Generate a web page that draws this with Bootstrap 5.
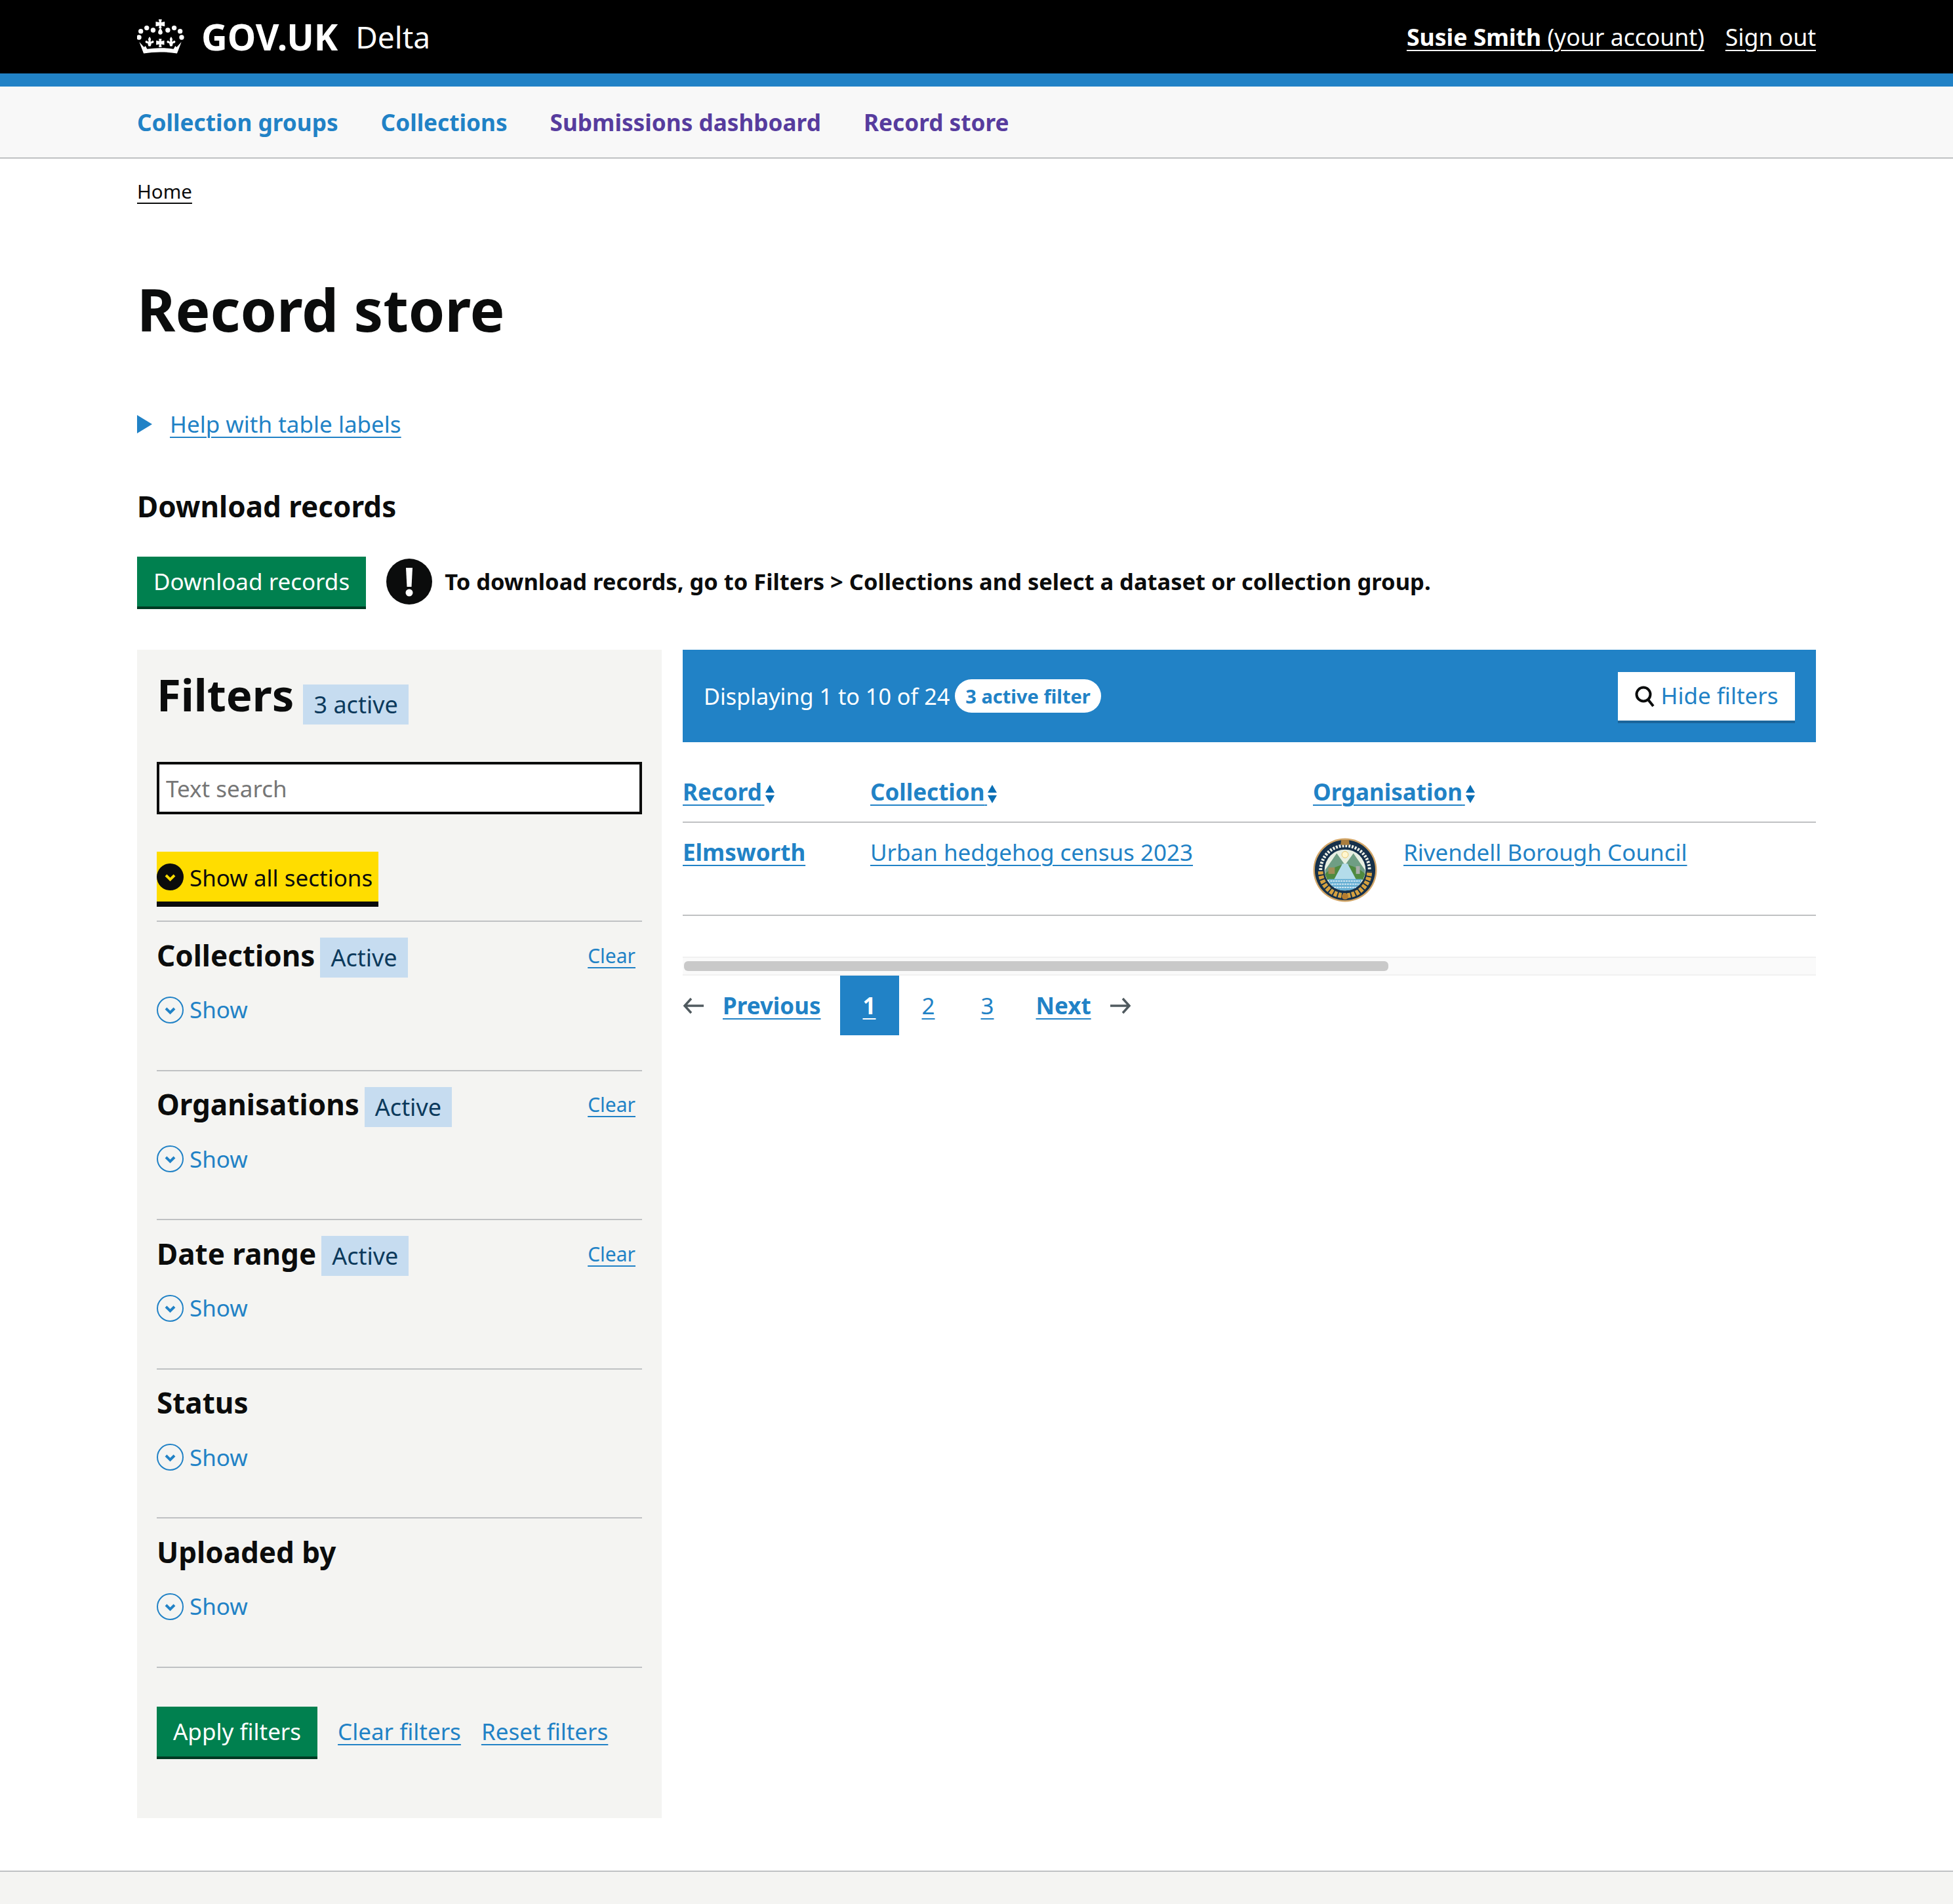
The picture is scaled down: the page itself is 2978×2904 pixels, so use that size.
<!DOCTYPE html>
<html lang="en">

<head>
    <meta charset="UTF-8">
    <title>Record store - Delta</title>
    <link rel="stylesheet" href="https://cdn.jsdelivr.net/npm/bootstrap@5.3.3/dist/css/bootstrap.min.css">
    <style>
        body {
            font-family: "Noto Sans", "Lato", sans-serif;
            font-size: 35px;
            line-height: 44px;
            color: #0b0c0c;
        }

        a {
            color: #2182c6;
            text-underline-offset: 6px;
            text-decoration-thickness: 2px;
        }

        .gv-wrap {
            padding-left: 209px;
            padding-right: 209px;
        }

        .gv-top {
            height: 112px;
            background: #000;
            color: #fff;
        }

        .gv-top a {
            color: #fff;
            font-size: 35.600px;
        }

        .gv-wordmark {
            font-size: 55px;
            font-weight: 700;
            line-height: 60px;
            margin-left: 26px;
        }

        .gv-service {
            font-size: 46px;
            line-height: 60px;
            margin-left: 27px;
        }

        .gv-band {
            height: 20px;
            background: #2182c6;
        }

        .gv-nav {
            height: 110px;
            background: #f8f8f8;
            border-bottom: 2px solid #bfc1c3;
            gap: 65px;
        }

        .gv-nav a {
            font-weight: 700;
            font-size: 35.200px;
            text-decoration: none;
        }

        .gv-nav a.gv-seen {
            color: #573c9e;
        }

        .gv-crumb {
            padding-top: 30px;
            font-size: 29.500px;
            line-height: 40px;
        }

        .gv-crumb a {
            color: #0b0c0c;
        }

        .gv-title {
            font-size: 89px;
            line-height: 100px;
            font-weight: 700;
            margin: 110px 0 103px;
        }

        .gv-help {
            gap: 27px;
        }

        .gv-tri {
            width: 0;
            height: 0;
            border-left: 23px solid #2182c6;
            border-top: 14px solid transparent;
            border-bottom: 14px solid transparent;
        }

        .gv-sub {
            font-size: 44px;
            line-height: 54px;
            font-weight: 700;
            margin: 76px 0 50px;
        }

        .gv-go {
            background: #00804f;
            color: #fff;
            font-size: 35px;
            line-height: 44px;
            border: 0;
            border-radius: 0;
            padding: 16px 25px;
            box-shadow: 0 4px 0 #003a22;
        }

        .gv-go:hover {
            background: #00804f;
            color: #fff;
        }

        .gv-warn {
            gap: 19px;
            margin-left: 31px;
            font-weight: 700;
            font-size: 34.500px;
        }

        .gv-mainrow {
            margin-top: 66px;
            gap: 32px;
        }

        .gv-panel {
            width: 800px;
            flex: none;
            background: #f4f4f2;
            padding: 30px 30px 94px;
        }

        .gv-filterhead {
            height: 84px;
            gap: 14px;
        }

        .gv-filterhead h2 {
            font-size: 67px;
            line-height: 76px;
            font-weight: 700;
            margin: 0;
            align-self: flex-start;
        }

        .gv-tag {
            background: #c6dcf0;
            color: #0c3a5c;
            height: 61px;
            line-height: 61px;
            padding: 0 16px;
            flex: none;
            font-size: 36px;
        }

        .gv-search {
            display: block;
            width: 100%;
            height: 80px;
            margin-top: 57px;
            border: 4px solid #0b0c0c;
            border-radius: 0;
            background: #fff;
            font-size: 35px;
            padding: 0 10px;
        }

        .gv-search::placeholder {
            color: #767676;
        }

        .gv-showall {
            height: 84px;
            margin-top: 57px;
            margin-bottom: 21px;
            width: 338px;
            background: #ffdd00;
            border-bottom: 8px solid #0b0c0c;
            gap: 9px;
            white-space: nowrap;
        }

        .gv-showall span {
            margin-top: 4px;
        }

        .gv-sect {
            height: 227.600px;
            border-top: 2px solid #bfc1c3;
            padding-top: 24px;
        }

        .gv-last {
            border-top: 2px solid #bfc1c3;
            padding-top: 59px;
            gap: 31px;
        }

        .gv-secthead {
            height: 61px;
            gap: 8px;
            padding-right: 10px;
        }

        .gv-secthead h3 {
            font-size: 44px;
            line-height: 54px;
            font-weight: 700;
            margin: 0 0 8px;
        }

        .gv-clear {
            font-size: 30px;
            margin-bottom: 6px;
        }

        .gv-show {
            margin-top: 27px;
            gap: 9px;
            color: #2182c6;
        }

        .gv-resultbar {
            height: 141px;
            background: #2182c6;
            color: #fff;
            padding: 0 32px;
            font-size: 34.200px;
        }

        .gv-pill {
            background: #fff;
            color: #2182c6;
            font-size: 29px;
            font-weight: 700;
            line-height: 51px;
            height: 51px;
            padding: 0 16px;
            border-radius: 26px;
            margin-left: 8px;
        }

        .gv-hide {
            width: 270px;
            height: 74px;
            background: #fff;
            color: #2182c6;
            border: 0;
            border-radius: 0;
            box-shadow: 0 4px 0 #1b659b;
            font-size: 35px;
            gap: 8px;
            padding: 0;
        }

        .gv-hide:hover {
            background: #fff;
            color: #2182c6;
        }

        .gv-tbl {
            margin: 0;
            width: 100%;
            table-layout: fixed;
        }

        .gv-tbl th,
        .gv-tbl td {
            border-bottom: 2px solid #bfc1c3;
            padding: 0;
            vertical-align: top;
            background: transparent;
        }

        .gv-tbl th {
            height: 122px;
            padding-top: 54px;
        }

        .gv-tbl td {
            height: 142px;
            padding-top: 23px;
        }

        .gv-nb {
            font-size: 14px;
        }

        .gv-orgcell {
            gap: 40px;
        }

        .gv-seal {
            width: 98px;
            height: 100px;
            margin-top: -1px;
            flex: none;
        }

        .gv-scroll {
            height: 29px;
            margin-top: 62px;
            background: #fafafa;
            border-top: 2px solid #f1f1f1;
            border-bottom: 2px solid #f1f1f1;
            padding: 5px 2px;
        }

        .gv-thumb {
            height: 15px;
            background: #c9c9c9;
            border-radius: 6px;
        }

        .gv-pager {
            height: 91px;
        }

        .gv-prevnext {
            font-weight: 700;
            margin: 0 29px;
        }

        .gv-num {
            width: 90px;
            height: 91px;
            line-height: 91px;
            text-align: center;
        }

        .gv-num.gv-cur {
            background: #2182c6;
            color: #fff;
            font-weight: 700;
        }

        .gv-foot {
            height: 51px;
            margin-top: 80px;
            background: #f4f4f2;
            border-top: 2px solid #bfc1c3;
        }
    </style>
</head>

<body>
    <header class="gv-top gv-wrap d-flex align-items-center">
        <svg width="72" height="54" viewBox="28 42 215 160" fill="#fff" aria-hidden="true">
            <path d="M126 43h15l-3 13 16-3v22l-16-3 2 12h-13l2-12-16 3V53l16 3z" />
            <path d="M134 80c3 8 10 14 10 22a10 10 0 0 1-20 0c0-8 7-14 10-22z" />
            <circle cx="101" cy="92" r="11" />
            <circle cx="168" cy="92" r="11" />
            <circle cx="72" cy="82" r="11" />
            <circle cx="197" cy="82" r="11" />
            <circle cx="45" cy="97" r="11" />
            <circle cx="224" cy="97" r="11" />
            <circle cx="37" cy="125" r="11" />
            <circle cx="231" cy="125" r="11" />
            <path d="M127 132h13l-2 10 14-3v20l-14-3 2 14h-13l2-14-14 3v-20l14 3z" />
            <path id="gv-fleur" d="M85 122c6 8 8 12 4 20l3 3c4-6 10-6 12-2 2 6-4 10-10 8l-4 14H80l-4-14c-6 2-12-2-10-8 2-4 8-4 12 2l3-3c-4-8-2-12 4-20z" />
            <path d="M183 122c6 8 8 12 4 20l3 3c4-6 10-6 12-2 2 6-4 10-10 8l-4 14h-10l-4-14c-6 2-12-2-10-8 2-4 8-4 12 2l3-3c-4-8-2-12 4-20z" />
            <path d="M38 146l22 24 6-6 8 14c40-6 80-6 120 0l8-14 6 6 22-24-20 52c-50-8-102-8-152 0z" />
        </svg>
        <span class="gv-wordmark">GOV.UK</span>
        <span class="gv-service">Delta</span>
        <div class="ms-auto d-flex gap-4">
            <a href="#"><b>Susie Smith</b> (your account)</a>
            <a href="#" class="ms-2">Sign out</a>
        </div>
    </header>
    <div class="gv-band"></div>
    <nav class="gv-nav gv-wrap d-flex align-items-center">
        <a href="#">Collection groups</a>
        <a href="#">Collections</a>
        <a href="#" class="gv-seen">Submissions dashboard</a>
        <a href="#" class="gv-seen">Record store</a>
    </nav>

    <main class="gv-wrap">
        <div class="gv-crumb"><a href="#">Home</a></div>
        <h1 class="gv-title">Record store</h1>

        <div class="gv-help d-flex align-items-center">
            <span class="gv-tri"></span>
            <a href="#">Help with table labels</a>
        </div>

        <h2 class="gv-sub">Download records</h2>
        <div class="d-flex align-items-center">
            <button type="button" class="btn gv-go">Download records</button>
            <div class="gv-warn d-flex align-items-center">
                <svg width="70" height="70" viewBox="0 0 70 70" aria-hidden="true">
                    <circle cx="35" cy="35" r="35" fill="#0b0c0c" />
                    <path d="M30 14h10l-1.500 29h-7z" fill="#fff" />
                    <circle cx="35" cy="52" r="5.500" fill="#fff" />
                </svg>
                <span>To download records, go to Filters &gt; Collections and select a dataset or collection group.</span>
            </div>
        </div>

        <div class="gv-mainrow d-flex align-items-start">
            <aside class="gv-panel">
                <div class="gv-filterhead d-flex align-items-end">
                    <h2>Filters</h2>
                    <span class="gv-tag">3 active</span>
                </div>
                <input class="gv-search" type="text" placeholder="Text search">
                <div class="gv-showall d-flex align-items-center">
                    <svg width="41" height="41" viewBox="0 0 41 41" aria-hidden="true">
                        <circle cx="20.500" cy="20.500" r="20.500" fill="#0b0c0c" />
                        <path d="M14 18l6.500 6.500L27 18" fill="none" stroke="#ffdd00" stroke-width="4" />
                    </svg>
                    <span>Show all sections</span>
                </div>

                <section class="gv-sect">
                    <div class="gv-secthead d-flex align-items-center">
                        <h3>Collections</h3>
                        <span class="gv-tag">Active</span>
                        <a href="#" class="gv-clear ms-auto">Clear</a>
                    </div>
                    <div class="gv-show d-flex align-items-center">
                        <svg width="41" height="41" viewBox="0 0 41 41" aria-hidden="true">
                            <circle cx="20.500" cy="20.500" r="19.500" fill="none" stroke="#2182c6" stroke-width="2" />
                            <path d="M14 18l6.500 6.500L27 18" fill="none" stroke="#2182c6" stroke-width="4" />
                        </svg>
                        <span>Show</span>
                    </div>
                </section>
                <section class="gv-sect">
                    <div class="gv-secthead d-flex align-items-center">
                        <h3>Organisations</h3>
                        <span class="gv-tag">Active</span>
                        <a href="#" class="gv-clear ms-auto">Clear</a>
                    </div>
                    <div class="gv-show d-flex align-items-center">
                        <svg width="41" height="41" viewBox="0 0 41 41" aria-hidden="true">
                            <circle cx="20.500" cy="20.500" r="19.500" fill="none" stroke="#2182c6" stroke-width="2" />
                            <path d="M14 18l6.500 6.500L27 18" fill="none" stroke="#2182c6" stroke-width="4" />
                        </svg>
                        <span>Show</span>
                    </div>
                </section>
                <section class="gv-sect">
                    <div class="gv-secthead d-flex align-items-center">
                        <h3>Date range</h3>
                        <span class="gv-tag">Active</span>
                        <a href="#" class="gv-clear ms-auto">Clear</a>
                    </div>
                    <div class="gv-show d-flex align-items-center">
                        <svg width="41" height="41" viewBox="0 0 41 41" aria-hidden="true">
                            <circle cx="20.500" cy="20.500" r="19.500" fill="none" stroke="#2182c6" stroke-width="2" />
                            <path d="M14 18l6.500 6.500L27 18" fill="none" stroke="#2182c6" stroke-width="4" />
                        </svg>
                        <span>Show</span>
                    </div>
                </section>
                <section class="gv-sect">
                    <div class="gv-secthead d-flex align-items-center">
                        <h3>Status</h3>
                    </div>
                    <div class="gv-show d-flex align-items-center">
                        <svg width="41" height="41" viewBox="0 0 41 41" aria-hidden="true">
                            <circle cx="20.500" cy="20.500" r="19.500" fill="none" stroke="#2182c6" stroke-width="2" />
                            <path d="M14 18l6.500 6.500L27 18" fill="none" stroke="#2182c6" stroke-width="4" />
                        </svg>
                        <span>Show</span>
                    </div>
                </section>
                <section class="gv-sect">
                    <div class="gv-secthead d-flex align-items-center">
                        <h3>Uploaded by</h3>
                    </div>
                    <div class="gv-show d-flex align-items-center">
                        <svg width="41" height="41" viewBox="0 0 41 41" aria-hidden="true">
                            <circle cx="20.500" cy="20.500" r="19.500" fill="none" stroke="#2182c6" stroke-width="2" />
                            <path d="M14 18l6.500 6.500L27 18" fill="none" stroke="#2182c6" stroke-width="4" />
                        </svg>
                        <span>Show</span>
                    </div>
                </section>

                <div class="gv-last d-flex align-items-center">
                    <button type="button" class="btn gv-go">Apply filters</button>
                    <a href="#">Clear filters</a>
                    <a href="#">Reset filters</a>
                </div>
            </aside>

            <div class="flex-grow-1">
                <div class="gv-resultbar d-flex align-items-center">
                    <span>Displaying 1 to 10 of 24</span>
                    <span class="gv-pill">3 active filter</span>
                    <button type="button" class="btn gv-hide ms-auto d-flex align-items-center justify-content-center">
                        <svg width="32" height="34" viewBox="0 0 32 34" aria-hidden="true">
                            <circle cx="14" cy="14" r="10.500" fill="none" stroke="#0b0c0c" stroke-width="4" />
                            <path d="M21 22l8 10" stroke="#0b0c0c" stroke-width="4" />
                        </svg>
                        <span>Hide filters</span>
                    </button>
                </div>

                <table class="gv-tbl">
                    <colgroup>
                        <col style="width: 286px">
                        <col style="width: 675px">
                        <col>
                    </colgroup>
                    <thead>
                        <tr>
                            <th><a href="#">Record<span class="gv-nb">&nbsp;</span></a><svg width="16" height="30" viewBox="0 0 16 30" aria-hidden="true"><path d="M8 1l7 12H1zM8 29L1 17h14z" fill="#0b6fb5" /></svg></th>
                            <th><a href="#">Collection<span class="gv-nb">&nbsp;</span></a><svg width="16" height="30" viewBox="0 0 16 30" aria-hidden="true"><path d="M8 1l7 12H1zM8 29L1 17h14z" fill="#0b6fb5" /></svg></th>
                            <th><a href="#">Organisation<span class="gv-nb">&nbsp;</span></a><svg width="16" height="30" viewBox="0 0 16 30" aria-hidden="true"><path d="M8 1l7 12H1zM8 29L1 17h14z" fill="#0b6fb5" /></svg></th>
                        </tr>
                    </thead>
                    <tbody>
                        <tr>
                            <td><a href="#"><b>Elmsworth</b></a></td>
                            <td><a href="#">Urban hedgehog census 2023</a></td>
                            <td>
                                <div class="gv-orgcell d-flex align-items-start">
                                    <svg class="gv-seal" viewBox="0 0 100 100" aria-hidden="true">
                                        <circle cx="50" cy="50" r="49.500" fill="#d2a566" />
                                        <circle cx="50" cy="50" r="47" fill="#15304a" />
                                        <path d="M12 50a38 38 0 0 1 76 0" fill="none" stroke="#eef0e6" stroke-width="5" stroke-dasharray="3 2" />
                                        <path d="M12 52a38 38 0 0 0 76 0" fill="none" stroke="#d6a13f" stroke-width="8" stroke-dasharray="5 2" />
                                        <circle cx="50" cy="50" r="32" fill="#e8efe2" />
                                        <path d="M19 50l18-26 13 18 13-18 18 26v8H19z" fill="#6f9e84" />
                                        <path d="M19 56c7-8 17-11 28-15v24H22zM81 56c-7-8-17-11-28-15v24h25z" fill="#4f8a3f" />
                                        <path d="M46 40h8l16 30H30z" fill="#b4dcea" />
                                        <path d="M24 64h52c-2 11-13 18-26 18s-24-7-26-18z" fill="#69b0d4" />
                                        <path d="M27 67h46M29 72h42M33 77h34" stroke="#f1f8fb" stroke-width="1.500" stroke-dasharray="3 1" />
                                        <rect x="24" y="46" width="10" height="10" fill="#a08d58" />
                                        <rect x="67" y="44" width="6" height="12" fill="#a9adaa" />
                                        <circle cx="50" cy="26" r="5" fill="#fff6cf" stroke="#e6c36a" />
                                        <path d="M44 3h12l1 8H43z" fill="#a97c3c" />
                                        <circle cx="50" cy="91" r="5" fill="#b67d30" />
                                    </svg>
                                    <a href="#">Rivendell Borough Council</a>
                                </div>
                            </td>
                        </tr>
                    </tbody>
                </table>

                <div class="gv-scroll">
                    <div class="gv-thumb" style="width: 62.3%"></div>
                </div>

                <nav class="gv-pager d-flex align-items-center">
                    <svg width="32" height="26" viewBox="0 0 32 26" aria-hidden="true">
                        <path d="M13 2L3 13l10 11M3 13h29" fill="none" stroke="#505a5f" stroke-width="3.500" />
                    </svg>
                    <a href="#" class="gv-prevnext">Previous</a>
                    <a href="#" class="gv-num gv-cur">1</a>
                    <a href="#" class="gv-num">2</a>
                    <a href="#" class="gv-num">3</a>
                    <a href="#" class="gv-prevnext">Next</a>
                    <svg width="32" height="26" viewBox="0 0 32 26" aria-hidden="true">
                        <path d="M19 2l10 11-10 11M29 13H0" fill="none" stroke="#505a5f" stroke-width="3.500" />
                    </svg>
                </nav>
            </div>
        </div>
    </main>

    <footer class="gv-foot"></footer>
    <script src="https://cdn.jsdelivr.net/npm/bootstrap@5.3.3/dist/js/bootstrap.bundle.min.js"></script>
</body>

</html>
